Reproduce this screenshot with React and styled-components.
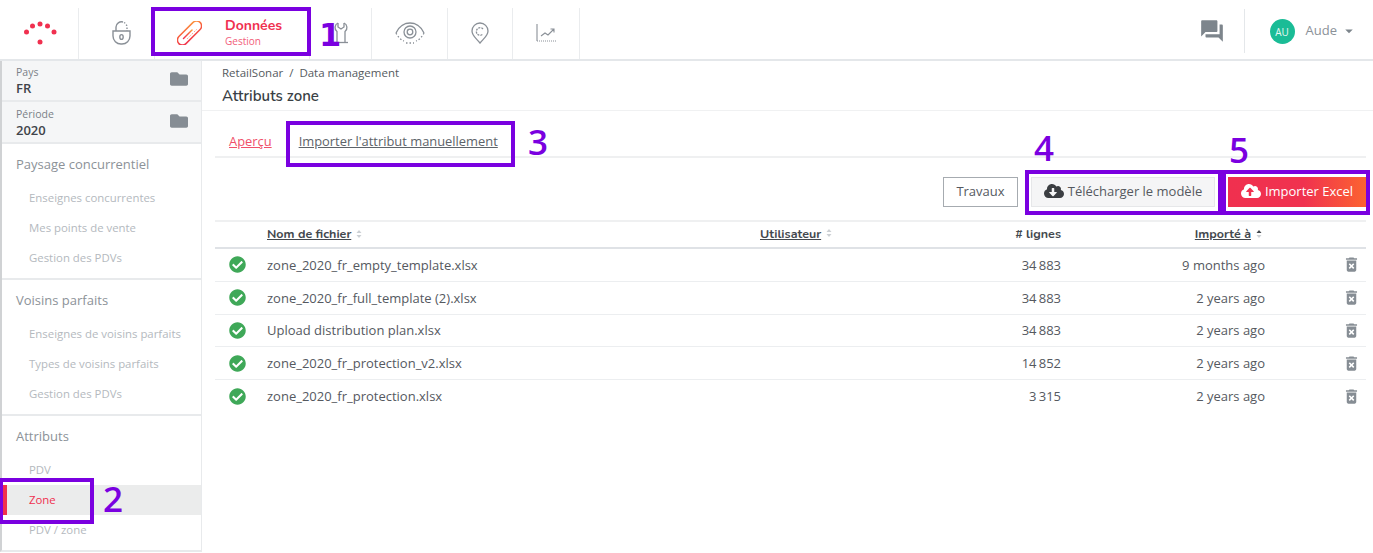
import React from 'react';
import styled, { createGlobalStyle } from 'styled-components';
import { FaFolder, FaCheckCircle, FaCloudDownloadAlt, FaCloudUploadAlt } from 'react-icons/fa';
import { MdForum, MdDeleteForever, MdArrowDropDown } from 'react-icons/md';

const GlobalStyle = createGlobalStyle`
  html, body {
    margin: 0;
    padding: 0;
    background: #fff;
    font-family: "Open Sans", "Liberation Sans", sans-serif;
    color: #4a4f55;
    overflow: hidden;
  }
  * { box-sizing: border-box; }
`;

const Page = styled.div`
  position: relative;
  width: 1373px;
  height: 553px;
  overflow: hidden;
  display: flex;
  flex-direction: column;
`;

const TopBar = styled.header`
  height: 61px;
  flex: none;
  display: flex;
  padding: 8px 0 0 2px;
  border-bottom: 2px solid #e4e7ea;
`;

const NavCell = styled.div`
  width: ${(p) => p.$w}px;
  flex: none;
  display: flex;
  align-items: center;
  justify-content: center;
  gap: 22px;
  border-right: 1px solid #eaecee;
  padding-left: ${(p) => p.$shift || 0}px;
  padding-bottom: 2px;
`;

const NavText = styled.div`
  display: flex;
  flex-direction: column;
  width: 63px;
  margin-top: -3px;
`;

const NavTitle = styled.span`
  font-family: "Nunito", "Lato", sans-serif;
  font-size: 14px;
  font-weight: 700;
  line-height: 19px;
  color: #f0304f;
  margin-left: 1px;
`;

const NavSub = styled.span`
  font-size: 10px;
  line-height: 12px;
  color: #f2607a;
  margin-left: 1px;
`;

const TopRight = styled.div`
  margin-left: auto;
  display: flex;
  align-items: center;
  padding-bottom: 4px;
`;

const ChatButton = styled.div`
  display: flex;
  width: 64px;
  height: 44px;
  align-items: center;
  margin-top: -2px;
  padding-left: 18px;
  color: #7d858c;
  border-right: 1px solid #e4e7ea;
  font-size: 26px;
`;

const Avatar = styled.div`
  width: 25px;
  height: 25px;
  border-radius: 50%;
  background: #1abc96;
  color: #e8f8f4;
  font-size: 10px;
  display: flex;
  align-items: center;
  justify-content: center;
  margin-left: 25px;
`;

const UserName = styled.span`
  font-size: 13px;
  color: #8b9198;
  margin-left: 11px;
  margin-top: -3px;
`;

const Caret = styled.span`
  display: flex;
  color: #7d858c;
  font-size: 18px;
  margin: -2px 15px 0 3px;
`;

const Body = styled.div`
  flex: 1;
  display: flex;
  min-height: 0;
`;

const Sidebar = styled.aside`
  width: 202px;
  flex: none;
  border-left: 2px solid #d0d2d4;
  border-right: 1px solid #e8eaec;
  border-bottom: 2px solid #e8eaec;
  height: 491px;
`;

const Picker = styled.div`
  height: ${(p) => p.$h}px;
  background: #f5f6f7;
  border-bottom: 2px solid #e8eaec;
  padding: ${(p) => p.$top}px 13px 0 14px;
  display: flex;
  align-items: center;
  justify-content: space-between;
`;

const PickerLabel = styled.div`
  font-size: 10.5px;
  line-height: 14px;
  color: #7b8187;
`;

const PickerValue = styled.div`
  font-size: 13px;
  line-height: 19px;
  font-weight: 600;
  color: #3f444a;
`;

const PickerIcon = styled.span`
  display: flex;
  color: #868d94;
  font-size: 18px;
  margin-top: -5px;
`;

const Section = styled.div`
  height: ${(p) => p.$h}px;
  padding-top: 10px;
  border-bottom: ${(p) => (p.$last ? 'none' : '2px solid #e8eaec')};
`;

const SectionTitle = styled.div`
  font-size: 13px;
  line-height: 20px;
  color: #8c9298;
  padding-left: 14px;
  margin-bottom: 9px;
`;

const SideItem = styled.div`
  position: relative;
  height: 30px;
  line-height: 30px;
  padding-left: 27px;
  font-size: 11.4px;
  color: ${(p) => (p.$active ? '#f0304f' : '#b4b9be')};
  background: ${(p) => (p.$active ? '#ebecec' : 'transparent')};

  &::before {
    content: '';
    display: ${(p) => (p.$active ? 'block' : 'none')};
    position: absolute;
    left: 1px;
    top: 0;
    bottom: 0;
    width: 4px;
    background: #f0304f;
  }
`;

const Main = styled.main`
  flex: 1;
  min-width: 0;
  display: flex;
  flex-direction: column;
`;

const TitleBlock = styled.div`
  height: 50px;
  padding: 3px 0 0 20px;
  border-bottom: 1px solid #f0f1f2;
`;

const Breadcrumb = styled.div`
  font-size: 11.5px;
  line-height: 17px;
  color: #555a60;
`;

const PageTitle = styled.h1`
  margin: 5px 0 0;
  font-family: "Nunito", "Lato", sans-serif;
  font-size: 15px;
  line-height: 20px;
  font-weight: 600;
  color: #3a3f45;
`;

const Content = styled.div`
  padding: 0 7px 0 13px;
`;

const Tabs = styled.div`
  height: 47px;
  padding: 15px 0 0 14px;
  display: flex;
  align-items: center;
  gap: 27px;
  border-bottom: 2px solid #eff0f1;
`;

const Tab = styled.a`
  font-size: 12.9px;
  text-decoration: underline;
  color: ${(p) => (p.$active ? '#f0506a' : '#5d6369')};
`;

const Toolbar = styled.div`
  height: 62px;
  padding-bottom: 13px;
  display: flex;
  justify-content: flex-end;
  align-items: flex-end;
  gap: 13px;
`;

const Button = styled.button`
  height: 30px;
  font-family: inherit;
  font-size: 13px;
  display: flex;
  align-items: center;
  justify-content: center;
  gap: 4px;
  padding: 0 0 2px;
  width: ${(p) => p.$w}px;
  color: ${(p) => (p.$primary ? '#fff' : '#55595f')};
  border: ${(p) => {
    if (p.$primary) return 'none';
    return p.$outline ? '1px solid #a6abb0' : '1px solid #e6e7e9';
  }};
  background: ${(p) => {
    if (p.$primary) return 'linear-gradient(90deg, #f0304f 0%, #f0324f 55%, #fc6330 100%)';
    return p.$outline ? '#fff' : '#f5f5f6';
  }};
  svg { font-size: 20px; color: ${(p) => (p.$primary ? '#fff' : '#3b3e42')}; }
`;

const Row = styled.div`
  display: grid;
  grid-template-columns: 52px 493px 301px 204px 1fr;
  align-items: center;
  height: 32.75px;
  border-bottom: ${(p) => (p.$last ? 'none' : '1px solid #eceef0')};
`;

const HeadRow = styled(Row)`
  border-top: 2px solid #eff0f1;
  border-bottom: 2px solid #dfe2e6;
  height: 29px;
  padding-bottom: 2px;
`;

const HeadCell = styled.div`
  font-family: "Nunito", "Lato", sans-serif;
  font-size: 12.5px;
  font-weight: 700;
  color: #43484e;
  display: flex;
  align-items: center;
  justify-content: ${(p) => p.$justify || 'flex-start'};
  padding-right: ${(p) => p.$inset || 0}px;
`;

const HeadLabel = styled.span`
  text-decoration: ${(p) => (p.$plain ? 'none' : 'underline')};
`;

const SortMark = styled.svg`
  width: 6px;
  height: 10px;
  margin-left: 5px;
`;

const StatusCell = styled.div`
  display: flex;
  justify-content: center;
  margin-left: 1px;
  margin-right: 8px;
  font-size: 17px;
  color: #3fa858;
`;

const Cell = styled.div`
  font-size: 13px;
  color: #55595f;
  text-align: ${(p) => (p.$right ? 'right' : 'left')};
  white-space: nowrap;
`;

const TrashCell = styled.div`
  display: flex;
  justify-content: flex-end;
  padding-right: 5px;
  font-size: 19px;
  color: #868d94;
`;

const Callout = styled.div`
  position: absolute;
  left: ${(p) => p.$x}px;
  top: ${(p) => p.$y}px;
  width: ${(p) => p.$w}px;
  height: ${(p) => p.$h}px;
  border: 4px solid #7a00e0;
  pointer-events: none;
`;

const CalloutNumber = styled.span`
  position: absolute;
  left: ${(p) => p.$x}px;
  top: ${(p) => p.$y}px;
  font-family: ${(p) => (p.$heavy ? '"DejaVu Sans"' : '"Open Sans"')}, sans-serif;
  font-size: ${(p) => (p.$heavy ? 32 : 35)}px;
  line-height: 40px;
  font-weight: ${(p) => (p.$heavy ? 700 : 600)};
  color: #7a00e0;
`;

const LogoDots = () => (
  <svg width="36" height="28" viewBox="0 0 36 28" fill="#f0304f">
    <circle cx="18" cy="5" r="2.5" />
    <circle cx="10.5" cy="7" r="2.5" />
    <circle cx="25.5" cy="7" r="2.5" />
    <circle cx="4.5" cy="13" r="2.5" />
    <circle cx="32" cy="13" r="2.5" />
    <circle cx="18" cy="23" r="2.5" />
  </svg>
);

const LockIcon = () => (
  <svg width="19" height="24" viewBox="0 0 19 24" fill="none" stroke="#8a9097" strokeWidth="1.4">
    <path d="M4 10V6a5.5 5.5 0 0 1 7-5" />
    <path d="M12 1.5a5.5 5.5 0 0 1 3 4.5v4" strokeDasharray="1.5 1.5" />
    <path d="M1 10h17v5a8 8 0 0 1-8 8H9a8 8 0 0 1-8-8z" />
    <ellipse cx="9.5" cy="16" rx="1.7" ry="2.4" />
  </svg>
);

const ClipIcon = () => (
  <svg width="25" height="24" viewBox="0 0 25 24" fill="none" strokeWidth="1.5">
    <defs>
      <linearGradient id="clipGrad" x1="0" y1="1" x2="1" y2="0">
        <stop offset="0" stopColor="#f0304f" />
        <stop offset="0.6" stopColor="#f8603f" />
        <stop offset="1" stopColor="#fc9a3c" />
      </linearGradient>
    </defs>
    <rect x="-15" y="-5" width="30" height="10" rx="5" stroke="url(#clipGrad)" transform="translate(12.5 12) rotate(-45)" />
    <path d="M15 9L6.5 17.5" stroke="url(#clipGrad)" strokeLinecap="round" />
    <path d="M19.5 8.5L10 18" stroke="#f8806a" strokeWidth="1" strokeDasharray="1 1.5" />
  </svg>
);

const WrenchIcon = () => (
  <svg width="14" height="22" viewBox="0 0 14 22" fill="none" stroke="#8a9097" strokeWidth="1.3">
    <path d="M4 1a5 5 0 0 0-1 8.5V20M10 1a5 5 0 0 1 1 8.5V20" />
    <path d="M4 1v4l3 2 3-2V1" />
    <path d="M0 20.5h14" />
  </svg>
);

const EyeIcon = () => (
  <svg width="30" height="22" viewBox="0 0 30 22" fill="none" stroke="#8a9097" strokeWidth="1.3">
    <path d="M1 11C4 4 10 1 15 1s11 3 14 10" />
    <path d="M1 11c2 4 5 7 8 8M29 11c-2 4-5 7-8 8" strokeDasharray="1.5 2" />
    <circle cx="15" cy="10" r="6" />
    <circle cx="15" cy="10" r="2.8" />
    <path d="M11 21h8" strokeDasharray="1.5 2" />
  </svg>
);

const PinIcon = () => (
  <svg width="18" height="22" viewBox="0 0 18 22" fill="none" stroke="#8a9097" strokeWidth="1.3">
    <path d="M9 21C6 17 1 14 1 9a8 8 0 0 1 16 0c0 5-5 8-8 12z" />
    <path d="M12 7a3.8 3.8 0 1 0 0 5" strokeDasharray="2 1" />
  </svg>
);

const ChartIcon = () => (
  <svg width="21" height="18" viewBox="0 0 21 18" fill="none" stroke="#8a9097" strokeWidth="1.1">
    <path d="M1 0v17" />
    <path d="M1 17h20" strokeDasharray="1 1" />
    <path d="M5 12l4-3 3 2 6-6M14.5 5H18v3.5" />
  </svg>
);

const SortIcon = ({ up }) => (
  <SortMark viewBox="0 0 6 10">
    <path d="M3 1l2.5 3h-5z" fill={up ? '#43484e' : '#ccd0d4'} />
    <path d="M3 9L.5 6h5z" fill="#ccd0d4" />
  </SortMark>
);

const files = [
  { name: 'zone_2020_fr_empty_template.xlsx', lines: '34\u2009883', date: '9 months ago' },
  { name: 'zone_2020_fr_full_template (2).xlsx', lines: '34\u2009883', date: '2 years ago' },
  { name: 'Upload distribution plan.xlsx', lines: '34\u2009883', date: '2 years ago' },
  { name: 'zone_2020_fr_protection_v2.xlsx', lines: '14\u2009852', date: '2 years ago' },
  { name: 'zone_2020_fr_protection.xlsx', lines: '3\u2009315', date: '2 years ago' },
];

const App = () => (
  <Page>
    <GlobalStyle />
    <TopBar>
      <NavCell $w={77}><LogoDots /></NavCell>
      <NavCell $w={76} $shift={10}><LockIcon /></NavCell>
      <NavCell $w={155}>
        <ClipIcon />
        <NavText>
          <NavTitle>Données</NavTitle>
          <NavSub>Gestion</NavSub>
        </NavText>
      </NavCell>
      <NavCell $w={62}><WrenchIcon /></NavCell>
      <NavCell $w={76}><EyeIcon /></NavCell>
      <NavCell $w={65}><PinIcon /></NavCell>
      <NavCell $w={67}><ChartIcon /></NavCell>
      <TopRight>
        <ChatButton><MdForum /></ChatButton>
        <Avatar>AU</Avatar>
        <UserName>Aude</UserName>
        <Caret><MdArrowDropDown /></Caret>
      </TopRight>
    </TopBar>
    <Body>
      <Sidebar>
        <Picker $h={41} $top={2}>
          <div>
            <PickerLabel>Pays</PickerLabel>
            <PickerValue>FR</PickerValue>
          </div>
          <PickerIcon><FaFolder /></PickerIcon>
        </Picker>
        <Picker $h={42} $top={3}>
          <div>
            <PickerLabel>Période</PickerLabel>
            <PickerValue>2020</PickerValue>
          </div>
          <PickerIcon><FaFolder /></PickerIcon>
        </Picker>
        <Section $h={136}>
          <SectionTitle>Paysage concurrentiel</SectionTitle>
          <SideItem>Enseignes concurrentes</SideItem>
          <SideItem>Mes points de vente</SideItem>
          <SideItem>Gestion des PDVs</SideItem>
        </Section>
        <Section $h={136}>
          <SectionTitle>Voisins parfaits</SectionTitle>
          <SideItem>Enseignes de voisins parfaits</SideItem>
          <SideItem>Types de voisins parfaits</SideItem>
          <SideItem>Gestion des PDVs</SideItem>
        </Section>
        <Section $last>
          <SectionTitle>Attributs</SectionTitle>
          <SideItem>PDV</SideItem>
          <SideItem $active>Zone</SideItem>
          <SideItem>PDV / zone</SideItem>
        </Section>
      </Sidebar>
      <Main>
        <TitleBlock>
          <Breadcrumb>RetailSonar &nbsp;/&nbsp; Data management</Breadcrumb>
          <PageTitle>Attributs zone</PageTitle>
        </TitleBlock>
        <Content>
          <Tabs>
            <Tab $active>Aperçu</Tab>
            <Tab>Importer l'attribut manuellement</Tab>
          </Tabs>
          <Toolbar>
            <Button $outline $w={75}>Travaux</Button>
            <Button $w={184}><FaCloudDownloadAlt />Télécharger le modèle</Button>
            <Button $primary $w={138}><FaCloudUploadAlt />Importer Excel</Button>
          </Toolbar>
          <HeadRow>
            <span />
            <HeadCell><HeadLabel>Nom de fichier</HeadLabel><SortIcon /></HeadCell>
            <HeadCell $justify="space-between">
              <span><HeadLabel>Utilisateur</HeadLabel><SortIcon /></span>
              <HeadLabel $plain># lignes</HeadLabel>
            </HeadCell>
            <HeadCell $justify="flex-end" $inset={3}><HeadLabel>Importé à</HeadLabel><SortIcon up /></HeadCell>
            <span />
          </HeadRow>
          {files.map((f, i) => (
            <Row key={f.name} $last={i === files.length - 1}>
              <StatusCell><FaCheckCircle /></StatusCell>
              <Cell>{f.name}</Cell>
              <Cell $right>{f.lines}</Cell>
              <Cell $right>{f.date}</Cell>
              <TrashCell><MdDeleteForever /></TrashCell>
            </Row>
          ))}
        </Content>
      </Main>
    </Body>
    <Callout $x={151} $y={7} $w={160} $h={49} />
    <CalloutNumber $heavy $x={319} $y={15}>1</CalloutNumber>
    <Callout $x={-1} $y={478} $w={95} $h={46} />
    <CalloutNumber $x={103} $y={479}>2</CalloutNumber>
    <Callout $x={286} $y={121} $w={229} $h={46} />
    <CalloutNumber $x={528} $y={122}>3</CalloutNumber>
    <Callout $x={1025} $y={170} $w={197} $h={45} />
    <CalloutNumber $x={1034} $y={128}>4</CalloutNumber>
    <Callout $x={1222} $y={170} $w={148} $h={45} />
    <CalloutNumber $x={1229} $y={130}>5</CalloutNumber>
  </Page>
);

export default App;
